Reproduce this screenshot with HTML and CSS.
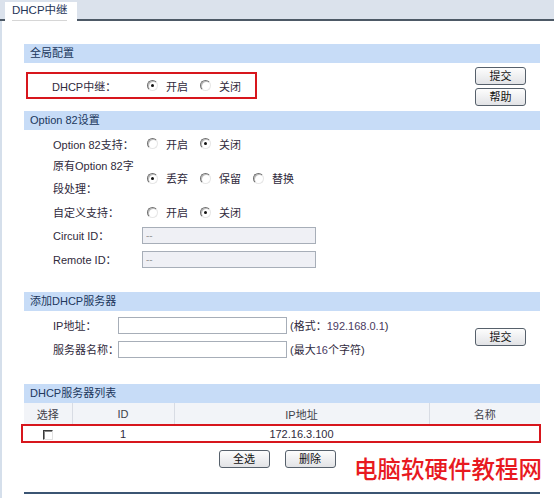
FILE: index.html
```html
<!DOCTYPE html>
<html lang="zh-CN">
<head>
<meta charset="utf-8">
<title>DHCP中继</title>
<link rel="stylesheet" href="styles.css">
</head>
<body>
<div class="tabbar"><div class="tab">DHCP中继</div></div>
<div class="page">
  <section class="panel">
    <div class="head">全局配置</div>
    <div class="global">
      <div class="relay">
        <span class="relay-label">DHCP中继：</span>
        <span class="opt"><span class="radio on"></span>开启</span>
        <span class="opt"><span class="radio"></span>关闭</span>
      </div>
      <div class="btncol">
        <button class="btn">提交</button>
        <button class="btn">帮助</button>
      </div>
    </div>
  </section>

  <section class="panel">
    <div class="head">Option 82设置</div>
    <div class="opt82">
      <div class="lbl">Option 82支持：</div>
      <div class="val"><span class="opt"><span class="radio"></span>开启</span><span class="opt"><span class="radio on"></span>关闭</span></div>
      <div class="lbl two">原有Option 82字<br>段处理：</div>
      <div class="val"><span class="opt"><span class="radio on"></span>丢弃</span><span class="opt"><span class="radio"></span>保留</span><span class="opt"><span class="radio"></span>替换</span></div>
      <div class="lbl">自定义支持：</div>
      <div class="val"><span class="opt"><span class="radio"></span>开启</span><span class="opt"><span class="radio on"></span>关闭</span></div>
      <div class="lbl">Circuit ID：</div>
      <div class="val field"><input class="txt dis" type="text" value="--" readonly></div>
      <div class="lbl">Remote ID：</div>
      <div class="val field"><input class="txt dis" type="text" value="--" readonly></div>
    </div>
  </section>

  <section class="panel">
    <div class="head">添加DHCP服务器</div>
    <div class="addsrv">
      <div class="addgrid">
        <div class="lbl">IP地址：</div>
        <input class="txt wide" type="text">
        <div class="hint">(格式：<span class="num">192.168.0.1</span>)</div>
        <div class="lbl">服务器名称：</div>
        <input class="txt wide" type="text">
        <div class="hint">(最大<span class="num">16</span>个字符)</div>
      </div>
      <button class="btn">提交</button>
    </div>
  </section>

  <section class="panel">
    <div class="head">DHCP服务器列表</div>
    <div class="tablewrap">
      <table class="list">
        <thead>
          <tr><th class="c1">选择</th><th class="c2">ID</th><th class="c3">IP地址</th><th class="c4">名称</th></tr>
        </thead>
        <tbody>
          <tr><td><span class="chk"></span></td><td>1</td><td>172.16.3.100</td><td></td></tr>
        </tbody>
      </table>
      <div class="rowmark"></div>
    </div>
    <div class="actions">
      <button class="btn">全选</button>
      <button class="btn">删除</button>
    </div>
  </section>
  <div class="rule"></div>
</div>
<div class="watermark">电脑软硬件教程网</div>
</body>
</html>
```
FILE: styles.css
```css
* { box-sizing: border-box; }
html, body { margin: 0; padding: 0; }
body {
  width: 554px;
  height: 498px;
  overflow: hidden;
  position: relative;
  background: #fff;
  color: #2f2a3c;
  font: 11px "Liberation Sans", "Noto Sans CJK SC", sans-serif;
}

.tabbar {
  height: 21px;
  background: #dbe2ec;
  border-bottom: 2px solid #4d5966;
  padding: 2px 0 0 5px;
}
.tab {
  position: relative;
  width: 72px;
  height: 19px;
  background: #fff;
  padding-left: 7px;
  line-height: 17px;
  font-size: 11.5px;
  color: #1f3558;
}
.tab::after {
  content: "";
  position: absolute;
  left: 7px;
  bottom: 0;
  width: 55px;
  height: 1px;
  background: #d6d6d6;
}

.page {
  height: 477px;
  border-left: 2px solid #d5dfeb;
  padding: 23px 14px 0 22px;
}

.head {
  height: 19px;
  line-height: 19px;
  background: #c7dcf7;
  padding-left: 6px;
  color: #20375c;
}

/* global */
.global {
  display: flex;
  justify-content: space-between;
  height: 48px;
}
.relay {
  margin: 9px 0 0 2px;
  width: 231px;
  height: 27px;
  border: 2px solid #d7161d;
  display: flex;
  align-items: center;
  padding-left: 24px;
}
.relay-label { width: 95px; flex: none; }
.btncol {
  display: flex;
  flex-direction: column;
  gap: 3px;
  margin: 4px 14px 0 0;
}

.btn {
  display: block;
  width: 51px;
  height: 18px;
  padding: 0;
  border: 1px solid #56606b;
  border-radius: 3px;
  background: linear-gradient(#fdfdfd, #e2e3e6);
  color: #111;
  font: 11px "Liberation Sans", "Noto Sans CJK SC", sans-serif;
  line-height: 16px;
  text-align: center;
}

/* radios */
.opt {
  display: inline-flex;
  align-items: center;
  margin-right: 12px;
}
.radio {
  position: relative;
  flex: none;
  width: 11px;
  height: 11px;
  margin-right: 8px;
  border-radius: 50%;
  border: 1px solid;
  border-color: #6f6f6f #e6e6e6 #e6e6e6 #6f6f6f;
  box-shadow: inset 1px 1px 0 #bdbdbd;
  background: #fff;
}
.radio.on::after {
  content: "";
  position: absolute;
  left: 3px;
  top: 3px;
  width: 3px;
  height: 3px;
  border-radius: 50%;
  background: #111;
}

/* option 82 */
.opt82 {
  display: grid;
  grid-template-columns: 89px auto;
  grid-template-rows: 23px 46px 22px 24px 24px;
  padding: 2px 0 21px 29px;
}
.opt82 .lbl { display: flex; align-items: center; }
.opt82 .lbl.two { display: block; line-height: 23px; }
.opt82 .val { display: flex; align-items: center; padding-left: 5px; }
.opt82 .val.field { padding-left: 0; }

.txt {
  height: 17px;
  margin: 0;
  padding: 0 3px;
  border: 1px solid #a7aeb8;
  background: #fff;
  font: 10px "Liberation Sans", sans-serif;
  color: #9a9a9a;
  outline: none;
}
.txt.dis { width: 174px; background: #eff0f5; }
.txt.wide { width: 169px; }

/* add server */
.addsrv {
  display: flex;
  align-items: center;
  justify-content: space-between;
  padding: 3px 14px 24px 29px;
}
.addgrid {
  display: grid;
  grid-template-columns: 65px 169px auto;
  grid-auto-rows: 22px;
  row-gap: 2px;
  align-items: center;
}
.addgrid .lbl { white-space: nowrap; }
.hint { padding-left: 3px; color: #2f2a3c; }
.num { color: #4a3a62; }

/* list */
.tablewrap { position: relative; }
.list {
  width: 516px;
  border-collapse: collapse;
  table-layout: fixed;
}
.list th {
  height: 21px;
  padding: 0;
  background: #f2f4f8;
  font-weight: normal;
  color: #3f3f4a;
  border-right: 1px solid #d8dce4;
}
.list th.c4 { border-right: 0; }
.list .c1 { width: 48px; }
.list .c2 { width: 102px; }
.list .c3 { width: 255px; }
.list .c4 { width: 111px; }
.list td {
  height: 19px;
  padding: 0;
  text-align: center;
  color: #2f2a3c;
}
.chk {
  display: inline-block;
  width: 10px;
  height: 10px;
  vertical-align: middle;
  border: 1px solid;
  border-color: #3a3a3a #e2e2e2 #e2e2e2 #3a3a3a;
  box-shadow: inset 1px 1px 0 #8a8a8a;
  background: #fff;
}
.rowmark {
  position: absolute;
  left: -3px;
  right: -1px;
  top: 21px;
  height: 19px;
  border: 2px solid #d7161d;
}
.actions {
  display: flex;
  justify-content: center;
  gap: 15px;
  padding-right: 10px;
  margin-top: 7px;
}
.rule {
  margin-top: 24px;
  height: 2px;
  background: #3b5573;
}

.watermark {
  position: absolute;
  left: 354px;
  top: 455px;
  font: 500 23.5px/26px "Noto Sans CJK SC", sans-serif;
  color: #e81a1f;
  white-space: nowrap;
}
```
